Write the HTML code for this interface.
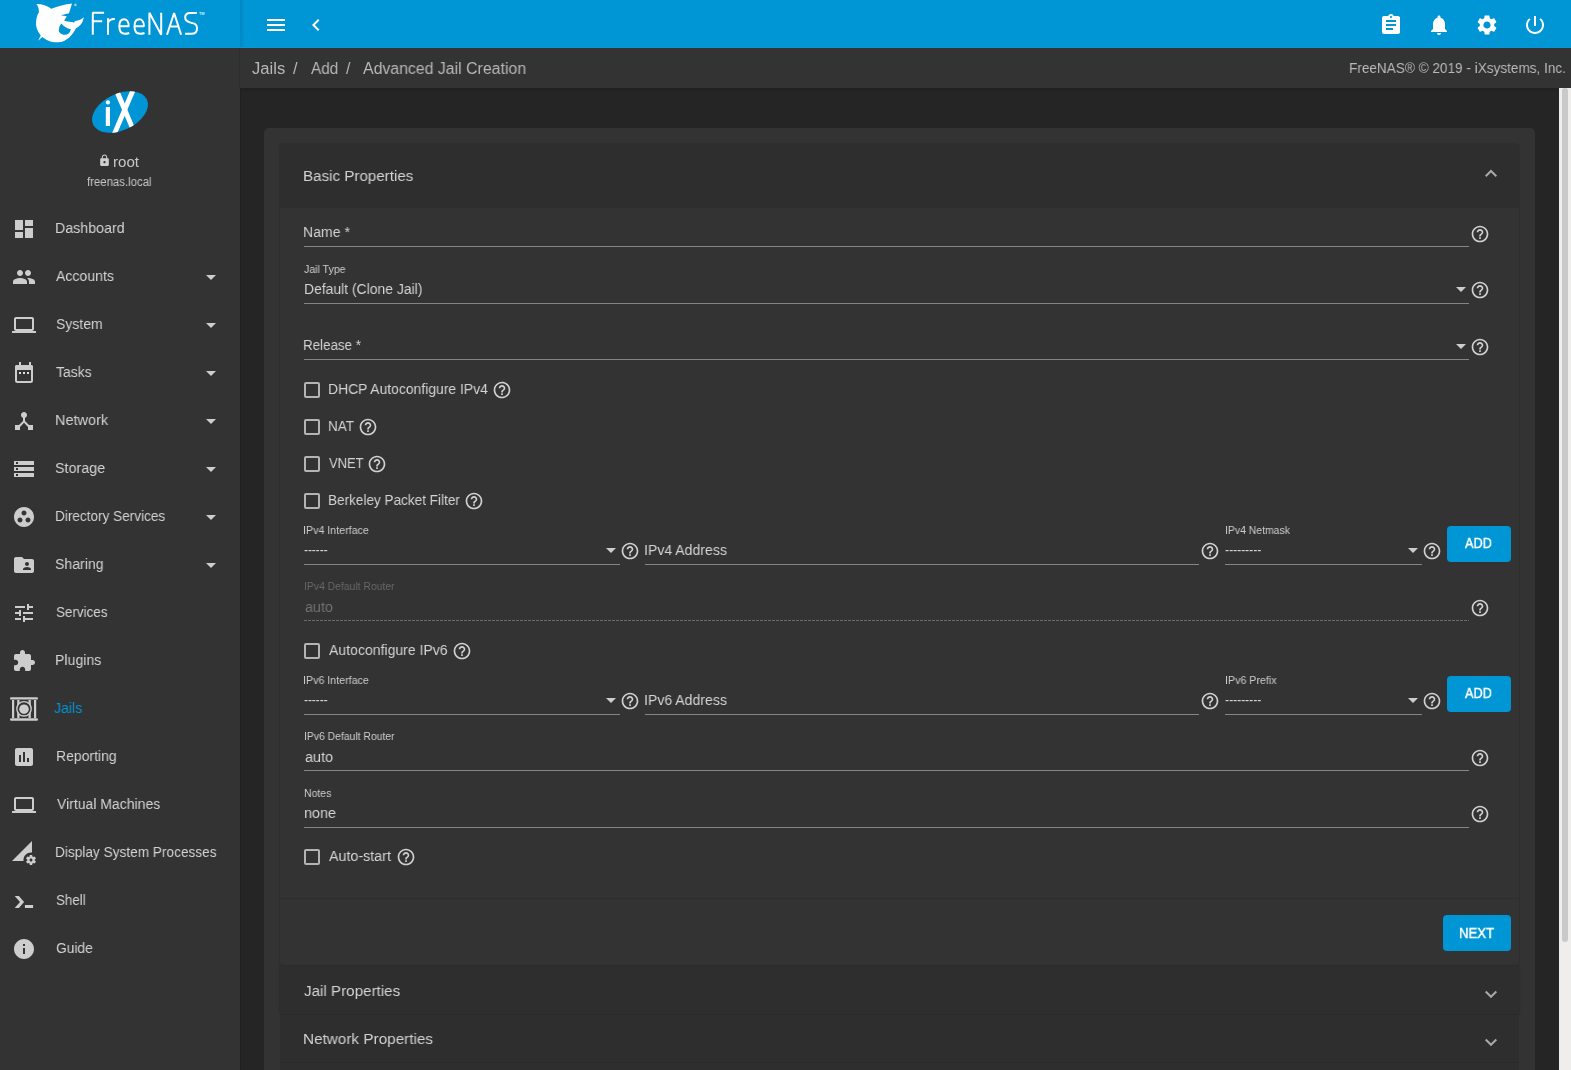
<!DOCTYPE html>
<html><head><meta charset="utf-8">
<style>
*{box-sizing:border-box;margin:0;padding:0}
html,body{width:1571px;height:1070px;overflow:hidden;background:#252525;font-family:"Liberation Sans",sans-serif;color:#ccc}
.a{position:absolute}
.t{position:absolute;white-space:nowrap;line-height:1;will-change:transform}
svg{position:absolute;overflow:visible}
.ul{position:absolute;height:1px;background:#8f8f8f}
.cb{position:absolute;width:16px;height:16px;border:2px solid #b4b4b4;border-radius:2px;left:304px}
.btn{position:absolute;background:#0095d5;border-radius:4px}
</style></head><body>
<div class="a" style="left:0px;top:0px;width:1571px;height:48px;background:#0095d5;"></div>
<div class="a" style="left:240px;top:0px;width:4px;height:48px;background:linear-gradient(to right,rgba(0,0,0,0.10),rgba(0,0,0,0));"></div>
<svg style="left:0;top:0" width="240" height="48" viewBox="0 0 240 48">
<path fill="#fff" fill-rule="evenodd" d="M36.3,4.1 C42,4 47,6 51.3,8.8 C58,6 65,4 72,3.4 L69,13.3 L60.8,15.3 L66.8,16.3 L64.2,20.6 C67,22 71,22 73.3,21.9 L73.6,23.2 L75,21 C79,20.5 82,19 83.6,17.2 C83.5,22 80,26.5 75.8,28.4 C73,34 67,42 57.8,42.3 C51,42.5 46,40 42.3,37 L38,40.8 L40.8,35.5 C37,31 35.5,26 36.1,21.5 C36.5,17 37.5,14.5 38.9,12.5 C39,8 38,6 36.3,4.1 Z M61.4,23.6 C64,27 67,28.5 70.9,29.2 C70,33 67.5,35 64.7,34.8 C61,34.6 58.3,32 58.9,29.7 C59.2,27 60,25 61.4,23.6 Z"/>
<circle cx="75.4" cy="4.9" r="1.3" fill="#8fd0ee"/>
<g fill="none" stroke="#fff" stroke-width="2" stroke-linejoin="bevel">
<path d="M92.8,34.8 V12.8 H104.1 M92.8,21.2 H102.2"/>
<path d="M108,34.8 V18.3 M108,22.5 C109.5,19.6 112,18.8 114.8,19"/>
<path d="M119.3,26.3 H128.7 C128.8,21.6 126.7,19.2 124,19.2 C121,19.2 119.3,22 119.3,26.6 C119.3,31.6 121.6,33.8 125,33.8 C126.6,33.8 128,33.5 129.3,33"/>
<path d="M134.5,26.3 H143.9 C144,21.6 141.9,19.2 139.2,19.2 C136.2,19.2 134.5,22 134.5,26.6 C134.5,31.6 136.8,33.8 140.2,33.8 C141.8,33.8 143.2,33.5 144.5,33"/>
<path d="M149.4,34.8 V12.8 L161.2,34.8 V12.8"/>
<path d="M167,34.8 L174.1,13 L181.1,34.8 M170.3,26.6 H177.9"/>
<path d="M196.8,13.1 H190 C186.6,13.1 185.2,15.2 185.2,17.6 C185.2,20.8 187.5,21.8 190.5,22.6 L193.5,23.4 C196.5,24.2 197,26 197,28.4 C197,31.8 195,33.8 191.4,33.8 H185.1"/>
</g>
<text x="198.9" y="14.9" font-size="3.9" fill="#d0ecf8" font-family="Liberation Sans" font-weight="bold">TM</text>
</svg>
<svg style="left:264px;top:13px" width="24" height="24" viewBox="0 0 24 24"><path fill="#fff" d="M3 18h18v-2H3v2zm0-5h18v-2H3v2zm0-7v2h18V6H3z" /></svg>
<svg style="left:304px;top:13px" width="24" height="24" viewBox="0 0 24 24"><path fill="#fff" d="M15.41 7.41L14 6l-6 6 6 6 1.41-1.41L10.83 12z" /></svg>
<svg style="left:1379px;top:13px" width="24" height="24" viewBox="0 0 24 24"><path fill="#fff" d="M19 3h-4.18C14.4 1.84 13.3 1 12 1c-1.3 0-2.4.84-2.82 2H5c-1.1 0-2 .9-2 2v14c0 1.1.9 2 2 2h14c1.1 0 2-.9 2-2V5c0-1.1-.9-2-2-2zm-7 0c.55 0 1 .45 1 1s-.45 1-1 1-1-.45-1-1 .45-1 1-1zm2 14H7v-2h7v2zm3-4H7v-2h10v2zm0-4H7V7h10v2z" /></svg>
<svg style="left:1427px;top:13px" width="24" height="24" viewBox="0 0 24 24"><path fill="#fff" d="M12 22c1.1 0 2-.9 2-2h-4c0 1.1.89 2 2 2zm6-6v-5c0-3.07-1.64-5.64-4.5-6.32V4c0-.83-.67-1.5-1.5-1.5s-1.5.67-1.5 1.5v.68C7.63 5.36 6 7.92 6 11v5l-2 2v1h16v-1l-2-2z" /></svg>
<svg style="left:1475px;top:13px" width="24" height="24" viewBox="0 0 24 24"><path fill="#fff" d="M19.14 12.94c.04-.3.06-.61.06-.94 0-.32-.02-.64-.07-.94l2.03-1.58c.18-.14.23-.41.12-.61l-1.92-3.32c-.12-.22-.37-.29-.59-.22l-2.39.96c-.5-.38-1.03-.7-1.62-.94l-.36-2.54c-.04-.24-.24-.41-.48-.41h-3.84c-.24 0-.43.17-.47.41l-.36 2.54c-.59.24-1.13.57-1.62.94l-2.39-.96c-.22-.08-.47 0-.59.22L2.74 8.87c-.12.21-.08.47.12.61l2.03 1.58c-.05.3-.09.63-.09.94s.02.64.07.94l-2.03 1.58c-.18.14-.23.41-.12.61l1.92 3.32c.12.22.37.29.59.22l2.39-.96c.5.38 1.03.7 1.62.94l.36 2.54c.05.24.24.41.48.41h3.84c.24 0 .44-.17.47-.41l.36-2.54c.59-.24 1.13-.56 1.62-.94l2.39.96c.22.08.47 0 .59-.22l1.92-3.32c.12-.22.07-.47-.12-.61l-2.01-1.58zM12 15.6c-1.98 0-3.6-1.62-3.6-3.6s1.62-3.6 3.6-3.6 3.6 1.62 3.6 3.6-1.62 3.6-3.6 3.6z" /></svg>
<svg style="left:1523px;top:13px" width="24" height="24" viewBox="0 0 24 24"><path fill="#fff" d="M13 3h-2v10h2V3zm4.83 2.17l-1.42 1.42C17.99 7.86 19 9.81 19 12c0 3.87-3.13 7-7 7s-7-3.13-7-7c0-2.19 1.01-4.14 2.58-5.42L6.17 5.17C4.23 6.82 3 9.26 3 12c0 4.97 4.03 9 9 9s9-4.03 9-9c0-2.74-1.23-5.18-3.17-6.83z" /></svg>
<div class="a" style="left:0px;top:48px;width:240px;height:1022px;background:#333;"></div>
<div class="a" style="left:240px;top:88px;width:1px;height:982px;background:#202020;"></div>
<div class="a" style="left:239px;top:48px;width:1px;height:40px;background:#2d2d2d;"></div>
<svg style="left:80px;top:80px" width="80" height="70" viewBox="80 80 80 70">
<defs><clipPath id="ixc"><ellipse cx="120" cy="112" rx="29.7" ry="18.3" transform="rotate(-25 120 112)"/></clipPath></defs>
<ellipse cx="120" cy="112" rx="29.7" ry="18.3" transform="rotate(-25 120 112)" fill="#0095d5"/>
<rect x="105.8" y="107" width="4.2" height="19" fill="#fff"/>
<circle cx="107.9" cy="102.4" r="2.1" fill="#fff"/>
<g clip-path="url(#ixc)" fill="#fff">
<path d="M113.4,89.9 L119.1,89.9 L135.0,127.9 L129.9,127.9 Z"/>
<path d="M131.2,88.2 L136.6,88.2 L116.4,135.2 L111.2,135.2 Z"/>
</g>
</svg>
<svg style="left:97.8px;top:153.5px" width="13" height="13" viewBox="0 0 24 24"><path fill="#cfcfcf" d="M18 8h-1V6c0-2.76-2.24-5-5-5S7 3.24 7 6v2H6c-1.1 0-2 .9-2 2v10c0 1.1.9 2 2 2h12c1.1 0 2-.9 2-2V10c0-1.1-.9-2-2-2zm-6 9c-1.1 0-2-.9-2-2s.9-2 2-2 2 .9 2 2-.9 2-2 2zm3.1-9H8.9V6c0-1.71 1.39-3.1 3.1-3.1 1.71 0 3.1 1.39 3.1 3.1v2z" /></svg>
<div class="t" style="left:113.12px;top:155.1px;font-size:14px;color:#c8c8c8;transform:scaleX(1.0783);transform-origin:0 0;">root</div>
<div class="t" style="left:87.30px;top:175.8px;font-size:12px;color:#c8c8c8;transform:scaleX(0.9485);transform-origin:0 0;">freenas.local</div>
<div class="t" style="left:55.48px;top:219.9px;font-size:15.5px;color:#d3d3d3;transform:scaleX(0.9176);transform-origin:0 0;">Dashboard</div>
<svg style="left:12px;top:217px" width="24" height="24" viewBox="0 0 24 24"><path fill="#cdcdcd" d="M3 13h8V3H3v10zm0 8h8v-6H3v6zm10 0h8V11h-8v10zm0-18v6h8V3h-8z" /></svg>
<div class="t" style="left:56.40px;top:267.9px;font-size:15.5px;color:#d3d3d3;transform:scaleX(0.9094);transform-origin:0 0;">Accounts</div>
<svg style="left:12px;top:265px" width="24" height="24" viewBox="0 0 24 24"><path fill="#cdcdcd" d="M16 11c1.66 0 2.99-1.34 2.99-3S17.66 5 16 5c-1.66 0-3 1.34-3 3s1.34 3 3 3zm-8 0c1.66 0 2.99-1.34 2.99-3S9.66 5 8 5C6.34 5 5 6.34 5 8s1.34 3 3 3zm0 2c-2.33 0-7 1.17-7 3.5V19h14v-2.5c0-2.33-4.67-3.5-7-3.5zm8 0c-.29 0-.62.02-.97.05 1.16.84 1.97 1.97 1.97 3.45V19h6v-2.5c0-2.33-4.67-3.5-7-3.5z" /></svg>
<svg style="left:199px;top:265px" width="24" height="24" viewBox="0 0 24 24"><path fill="#cdcdcd" d="M7 10l5 5 5-5z"/></svg>
<div class="t" style="left:55.50px;top:315.9px;font-size:15.5px;color:#d3d3d3;transform:scaleX(0.9040);transform-origin:0 0;">System</div>
<svg style="left:12px;top:313px" width="24" height="24" viewBox="0 0 24 24"><path fill="#cdcdcd" d="M20 18c1.1 0 1.99-.9 1.99-2L22 6c0-1.1-.9-2-2-2H4c-1.1 0-2 .9-2 2v10c0 1.1.9 2 2 2H0v2h24v-2h-4zM4 6h16v10H4V6z" /></svg>
<svg style="left:199px;top:313px" width="24" height="24" viewBox="0 0 24 24"><path fill="#cdcdcd" d="M7 10l5 5 5-5z"/></svg>
<div class="t" style="left:56.40px;top:363.9px;font-size:15.5px;color:#d3d3d3;transform:scaleX(0.9026);transform-origin:0 0;">Tasks</div>
<svg style="left:12px;top:361px" width="24" height="24" viewBox="0 0 24 24">
<rect x="4" y="5" width="16" height="16" rx="1.5" fill="none" stroke="#cdcdcd" stroke-width="2"/>
<rect x="3" y="4" width="18" height="5" rx="1.5" fill="#cdcdcd"/>
<rect x="7" y="1" width="2" height="4" fill="#cdcdcd"/><rect x="17" y="1" width="2" height="4" fill="#cdcdcd"/>
<rect x="7" y="11" width="2" height="2" fill="#e0e0e0"/><rect x="11" y="11" width="2" height="2" fill="#e0e0e0"/><rect x="15" y="11" width="2" height="2" fill="#e0e0e0"/>
</svg>
<svg style="left:199px;top:361px" width="24" height="24" viewBox="0 0 24 24"><path fill="#cdcdcd" d="M7 10l5 5 5-5z"/></svg>
<div class="t" style="left:55.46px;top:411.9px;font-size:15.5px;color:#d3d3d3;transform:scaleX(0.9357);transform-origin:0 0;">Network</div>
<svg style="left:12px;top:409px" width="24" height="24" viewBox="0 0 24 24"><path fill="#cdcdcd" d="M17 16l-4-4V8.82C14.16 8.4 15 7.3 15 6c0-1.66-1.34-3-3-3S9 4.34 9 6c0 1.3.84 2.4 2 2.82V12l-4 4H3v5h5v-3.05l4-4.2 4 4.2V21h5v-5h-4z" /></svg>
<svg style="left:199px;top:409px" width="24" height="24" viewBox="0 0 24 24"><path fill="#cdcdcd" d="M7 10l5 5 5-5z"/></svg>
<div class="t" style="left:55.48px;top:459.9px;font-size:15.5px;color:#d3d3d3;transform:scaleX(0.9226);transform-origin:0 0;">Storage</div>
<svg style="left:12px;top:457px" width="24" height="24" viewBox="0 0 24 24"><path fill="#cdcdcd" d="M2 20h20v-4H2v4zm2-3h2v2H4v-2zM2 4v4h20V4H2zm4 3H4V5h2v2zm-4 7h20v-4H2v4zm2-3h2v2H4v-2z" /></svg>
<svg style="left:199px;top:457px" width="24" height="24" viewBox="0 0 24 24"><path fill="#cdcdcd" d="M7 10l5 5 5-5z"/></svg>
<div class="t" style="left:55.12px;top:507.9px;font-size:15.5px;color:#d3d3d3;transform:scaleX(0.8760);transform-origin:0 0;">Directory Services</div>
<svg style="left:12px;top:505px" width="24" height="24" viewBox="0 0 24 24"><path fill="#cdcdcd" d="M12 2C6.48 2 2 6.48 2 12s4.48 10 10 10 10-4.48 10-10S17.52 2 12 2zM8 17.5c-1.38 0-2.5-1.12-2.5-2.5s1.12-2.5 2.5-2.5 2.5 1.12 2.5 2.5-1.12 2.5-2.5 2.5zM9.5 8c0-1.38 1.12-2.5 2.5-2.5s2.5 1.12 2.5 2.5-1.12 2.5-2.5 2.5S9.5 9.38 9.5 8zm6.5 9.5c-1.38 0-2.5-1.12-2.5-2.5s1.12-2.5 2.5-2.5 2.5 1.12 2.5 2.5-1.12 2.5-2.5 2.5z" /></svg>
<svg style="left:199px;top:505px" width="24" height="24" viewBox="0 0 24 24"><path fill="#cdcdcd" d="M7 10l5 5 5-5z"/></svg>
<div class="t" style="left:55.49px;top:555.9px;font-size:15.5px;color:#d3d3d3;transform:scaleX(0.9096);transform-origin:0 0;">Sharing</div>
<svg style="left:12px;top:553px" width="24" height="24" viewBox="0 0 24 24"><path fill="#cdcdcd" d="M20 6h-8l-2-2H4c-1.1 0-1.99.9-1.99 2L2 18c0 1.1.9 2 2 2h16c1.1 0 2-.9 2-2V8c0-1.1-.9-2-2-2zm-5 3c1.1 0 2 .9 2 2s-.9 2-2 2-2-.9-2-2 .9-2 2-2zm4 8h-8v-1c0-1.33 2.67-2 4-2s4 .67 4 2v1z" /></svg>
<svg style="left:199px;top:553px" width="24" height="24" viewBox="0 0 24 24"><path fill="#cdcdcd" d="M7 10l5 5 5-5z"/></svg>
<div class="t" style="left:55.53px;top:603.9px;font-size:15.5px;color:#d3d3d3;transform:scaleX(0.8672);transform-origin:0 0;">Services</div>
<svg style="left:12px;top:601px" width="24" height="24" viewBox="0 0 24 24"><path fill="#cdcdcd" d="M3 17v2h6v-2H3zM3 5v2h10V5H3zm10 16v-2h8v-2h-8v-2h-2v6h2zM7 9v2H3v2h4v2h2V9H7zm14 4v-2H11v2h10zm-6-4h2V7h4V5h-4V3h-2v6z" /></svg>
<div class="t" style="left:55.49px;top:651.9px;font-size:15.5px;color:#d3d3d3;transform:scaleX(0.9120);transform-origin:0 0;">Plugins</div>
<svg style="left:12px;top:649px" width="24" height="24" viewBox="0 0 24 24"><path fill="#cdcdcd" d="M20.5 11H19V7c0-1.1-.9-2-2-2h-4V3.5C13 2.12 11.88 1 10.5 1S8 2.12 8 3.5V5H4c-1.1 0-1.99.9-1.99 2v3.8H3.5c1.49 0 2.7 1.21 2.7 2.7s-1.21 2.7-2.7 2.7H2V20c0 1.1.9 2 2 2h3.8v-1.5c0-1.490 1.21-2.7 2.7-2.7 1.49 0 2.7 1.21 2.7 2.7V22H17c1.1 0 2-.9 2-2v-4h1.5c1.38 0 2.5-1.12 2.5-2.5S21.88 11 20.5 11z" /></svg>
<div class="t" style="left:54.40px;top:699.9px;font-size:15.5px;color:#0095d5;transform:scaleX(0.9097);transform-origin:0 0;">Jails</div>
<svg style="left:10px;top:696px" width="28" height="24" viewBox="0 0 28 24">
<rect x="0" y="1.2" width="28" height="2.4" rx="1.2" fill="#cdcdcd"/>
<rect x="0" y="22.3" width="28" height="2.4" rx="1.2" fill="#cdcdcd"/>
<rect x="2" y="4" width="2.2" height="18" fill="#cdcdcd"/>
<rect x="7.2" y="4" width="2.3" height="18" fill="#cdcdcd"/>
<rect x="18.5" y="4" width="2.3" height="18" fill="#cdcdcd"/>
<rect x="24" y="4" width="2.2" height="18" fill="#cdcdcd"/>
<circle cx="14" cy="12.8" r="7.2" fill="#333" stroke="#cdcdcd" stroke-width="1.4"/>
<circle cx="14" cy="13.2" r="4.8" fill="#cdcdcd"/>
</svg>
<div class="t" style="left:55.70px;top:747.9px;font-size:15.5px;color:#d3d3d3;transform:scaleX(0.9030);transform-origin:0 0;">Reporting</div>
<svg style="left:12px;top:745px" width="24" height="24" viewBox="0 0 24 24"><path fill="#cdcdcd" d="M19 3H5c-1.1 0-2 .9-2 2v14c0 1.1.9 2 2 2h14c1.1 0 2-.9 2-2V5c0-1.1-.9-2-2-2zM9 17H7v-7h2v7zm4 0h-2V7h2v10zm4 0h-2v-4h2v4z" /></svg>
<div class="t" style="left:56.60px;top:795.9px;font-size:15.5px;color:#d3d3d3;transform:scaleX(0.9035);transform-origin:0 0;">Virtual Machines</div>
<svg style="left:12px;top:793px" width="24" height="24" viewBox="0 0 24 24"><path fill="#cdcdcd" d="M20 18c1.1 0 1.99-.9 1.99-2L22 6c0-1.1-.9-2-2-2H4c-1.1 0-2 .9-2 2v10c0 1.1.9 2 2 2H0v2h24v-2h-4zM4 6h16v10H4V6z" /></svg>
<div class="t" style="left:55.42px;top:843.9px;font-size:15.5px;color:#d3d3d3;transform:scaleX(0.8808);transform-origin:0 0;">Display System Processes</div>
<svg style="left:12px;top:841px" width="24" height="24" viewBox="0 0 24 24"><path fill="#cdcdcd" d="M18.99 11.5c.34 0 .67.03 1 .07L20 0 0 20h11.56c-.04-.33-.07-.66-.07-1 0-4.14 3.36-7.5 7.5-7.5zm3.71 7.99c.02-.16.04-.32.04-.49 0-.17-.01-.33-.04-.49l1.06-.83c.09-.08.12-.21.06-.32l-1-1.73c-.06-.11-.19-.15-.31-.11l-1.24.5c-.26-.2-.54-.37-.85-.49l-.19-1.32c-.01-.12-.12-.21-.24-.21h-2c-.12 0-.23.09-.25.21l-.19 1.32c-.3.13-.59.29-.85.49l-1.240-.5c-.11-.04-.24 0-.31.11l-1 1.73c-.06.11-.04.24.06.32l1.06.83c-.02.16-.03.32-.03.49 0 .17.01.33.03.49l-1.06.83c-.09.08-.12.21-.06.32l1 1.73c.06.11.19.15.31.11l1.24-.5c.26.2.54.37.85.49l.19 1.32c.02.12.12.21.25.21h2c.12 0 .23-.09.25-.21l.19-1.32c.3-.13.59-.29.84-.49l1.25.5c.11.04.24 0 .31-.11l1-1.73c.06-.11.03-.24-.06-.32l-1.07-.83zm-3.71 1.01c-.83 0-1.5-.67-1.5-1.5s.67-1.5 1.5-1.5 1.5.67 1.5 1.5-.67 1.5-1.5 1.5z" /></svg>
<div class="t" style="left:55.74px;top:891.9px;font-size:15.5px;color:#d3d3d3;transform:scaleX(0.8606);transform-origin:0 0;">Shell</div>
<svg style="left:12px;top:889px" width="24" height="24" viewBox="0 0 24 24"><path fill="#cdcdcd" d="M2.7,7 L6.9,7 L12.1,13 L6.9,18.9 L2.7,18.9 L8,13 Z M12.9,16 H21.1 V19 H12.9 Z" /></svg>
<div class="t" style="left:55.71px;top:939.9px;font-size:15.5px;color:#d3d3d3;transform:scaleX(0.8900);transform-origin:0 0;">Guide</div>
<svg style="left:12px;top:937px" width="24" height="24" viewBox="0 0 24 24"><path fill="#cdcdcd" d="M12 2C6.48 2 2 6.48 2 12s4.48 10 10 10 10-4.48 10-10S17.52 2 12 2zm1 15h-2v-6h2v6zm0-8h-2V7h2v2z" /></svg>
<div class="a" style="left:240px;top:48px;width:1331px;height:40px;background:#333;"></div>
<div class="t" style="left:251.50px;top:60.9px;font-size:16px;color:#b8b8b8;transform:scaleX(1.0375);transform-origin:0 0;">Jails</div>
<div class="t" style="left:293.40px;top:60.9px;font-size:16px;color:#b8b8b8;transform:scaleX(1.0200);transform-origin:0 0;">/</div>
<div class="t" style="left:310.50px;top:60.9px;font-size:16px;color:#b8b8b8;transform:scaleX(0.9571);transform-origin:0 0;">Add</div>
<div class="t" style="left:346.20px;top:60.9px;font-size:16px;color:#b8b8b8;transform:scaleX(0.9600);transform-origin:0 0;">/</div>
<div class="t" style="left:363.10px;top:60.9px;font-size:16px;color:#b8b8b8;transform:scaleX(0.9909);transform-origin:0 0;">Advanced Jail Creation</div>
<div class="t" style="left:1349.12px;top:60.1px;font-size:15.5px;color:#b8b8b8;transform:scaleX(0.8760);transform-origin:0 0;">FreeNAS&reg; &copy; 2019 - iXsystems, Inc.</div>
<div class="a" style="left:241px;top:88px;width:1318px;height:1px;background:#202020;"></div>
<div class="a" style="left:241px;top:89px;width:1318px;height:4px;background:linear-gradient(rgba(0,0,0,0.10),rgba(0,0,0,0));"></div>
<div class="a" style="left:0px;top:48px;width:1571px;height:1px;background:#3a302c;"></div>
<div class="a" style="left:0px;top:47px;width:1571px;height:1px;background:#009ade;"></div>
<div class="a" style="left:1559px;top:88px;width:12px;height:982px;background:#efeeec;"></div>
<div class="a" style="left:1562px;top:88px;width:6px;height:854px;background:#c9c9c9;border-radius:3px;"></div>
<div class="a" style="left:264px;top:128px;width:1271px;height:942px;background:#333;border-radius:5px 5px 0 0;"></div>
<div class="a" style="left:280px;top:144px;width:1239px;height:822px;background:#333;border-radius:4px;box-shadow:0 0 2px rgba(0,0,0,0.35);"></div>
<div class="a" style="left:280px;top:144px;width:1239px;height:64px;background:#2e2e2e;border-radius:4px 4px 0 0;"></div>
<div class="t" style="left:302.92px;top:168.1px;font-size:15.5px;color:#d3d3d3;transform:scaleX(0.9777);transform-origin:0 0;">Basic Properties</div>
<svg style="left:1479px;top:161px" width="24" height="24" viewBox="0 0 24 24"><path fill="none" stroke="#a8a8a8" stroke-width="2" d="M6.7,15.3 L12,10 L17.3,15.3"/></svg>
<div class="t" style="left:303.49px;top:223.7px;font-size:15.5px;color:#d3d3d3;transform:scaleX(0.9080);transform-origin:0 0;">Name *</div>
<div class="ul" style="left:304px;top:246px;width:1165px;background:#858585"></div>
<svg style="left:1470.0px;top:223.5px" width="20" height="20" viewBox="0 0 24 24"><path fill="#d0d0d0" d="M11 18h2v-2h-2v2zm1-16C6.48 2 2 6.48 2 12s4.48 10 10 10 10-4.48 10-10S17.52 2 12 2zm0 18c-4.41 0-8-3.59-8-8s3.59-8 8-8 8 3.59 8 8-3.59 8-8 8zm0-14c-2.21 0-4 1.79-4 4h2c0-1.1.9-2 2-2s2 .9 2 2c0 2-3 1.750-3 5h2c0-2.25 3-2.5 3-5 0-2.210-1.79-4-4-4z" /></svg>
<div class="t" style="left:304.00px;top:263.7px;font-size:11px;color:#cdcdcd;transform:scaleX(0.9628);transform-origin:0 0;">Jail Type</div>
<div class="t" style="left:303.50px;top:280.8px;font-size:15.5px;color:#d3d3d3;transform:scaleX(0.8977);transform-origin:0 0;">Default (Clone Jail)</div>
<div class="ul" style="left:304px;top:303px;width:1165px;background:#858585"></div>
<svg style="left:1449px;top:277.0px" width="24" height="24" viewBox="0 0 24 24"><path fill="#cdcdcd" d="M7 10l5 5 5-5z"/></svg>
<svg style="left:1470.0px;top:279.6px" width="20" height="20" viewBox="0 0 24 24"><path fill="#d0d0d0" d="M11 18h2v-2h-2v2zm1-16C6.48 2 2 6.48 2 12s4.48 10 10 10 10-4.48 10-10S17.52 2 12 2zm0 18c-4.41 0-8-3.59-8-8s3.59-8 8-8 8 3.59 8 8-3.59 8-8 8zm0-14c-2.21 0-4 1.79-4 4h2c0-1.1.9-2 2-2s2 .9 2 2c0 2-3 1.750-3 5h2c0-2.25 3-2.5 3-5 0-2.210-1.79-4-4-4z" /></svg>
<div class="t" style="left:303.24px;top:336.9px;font-size:15.5px;color:#d3d3d3;transform:scaleX(0.8621);transform-origin:0 0;">Release *</div>
<div class="ul" style="left:304px;top:359px;width:1165px;background:#858585"></div>
<svg style="left:1449px;top:333.9px" width="24" height="24" viewBox="0 0 24 24"><path fill="#cdcdcd" d="M7 10l5 5 5-5z"/></svg>
<svg style="left:1470.0px;top:336.6px" width="20" height="20" viewBox="0 0 24 24"><path fill="#d0d0d0" d="M11 18h2v-2h-2v2zm1-16C6.48 2 2 6.48 2 12s4.48 10 10 10 10-4.48 10-10S17.52 2 12 2zm0 18c-4.41 0-8-3.59-8-8s3.59-8 8-8 8 3.59 8 8-3.59 8-8 8zm0-14c-2.21 0-4 1.79-4 4h2c0-1.1.9-2 2-2s2 .9 2 2c0 2-3 1.750-3 5h2c0-2.25 3-2.5 3-5 0-2.210-1.79-4-4-4z" /></svg>
<div class="cb" style="top:382px"></div>
<div class="t" style="left:327.60px;top:380.9px;font-size:15.5px;color:#d3d3d3;transform:scaleX(0.8977);transform-origin:0 0;">DHCP Autoconfigure IPv4</div>
<svg style="left:492.0px;top:380.0px" width="20" height="20" viewBox="0 0 24 24"><path fill="#d0d0d0" d="M11 18h2v-2h-2v2zm1-16C6.48 2 2 6.48 2 12s4.48 10 10 10 10-4.48 10-10S17.52 2 12 2zm0 18c-4.41 0-8-3.59-8-8s3.59-8 8-8 8 3.59 8 8-3.59 8-8 8zm0-14c-2.21 0-4 1.79-4 4h2c0-1.1.9-2 2-2s2 .9 2 2c0 2-3 1.750-3 5h2c0-2.25 3-2.5 3-5 0-2.210-1.79-4-4-4z" /></svg>
<div class="cb" style="top:419px"></div>
<div class="t" style="left:327.63px;top:417.9px;font-size:15.5px;color:#d3d3d3;transform:scaleX(0.8690);transform-origin:0 0;">NAT</div>
<svg style="left:358.0px;top:417.0px" width="20" height="20" viewBox="0 0 24 24"><path fill="#d0d0d0" d="M11 18h2v-2h-2v2zm1-16C6.48 2 2 6.48 2 12s4.48 10 10 10 10-4.48 10-10S17.52 2 12 2zm0 18c-4.41 0-8-3.59-8-8s3.59-8 8-8 8 3.59 8 8-3.59 8-8 8zm0-14c-2.21 0-4 1.79-4 4h2c0-1.1.9-2 2-2s2 .9 2 2c0 2-3 1.750-3 5h2c0-2.25 3-2.5 3-5 0-2.210-1.79-4-4-4z" /></svg>
<div class="cb" style="top:456px"></div>
<div class="t" style="left:328.50px;top:454.9px;font-size:15.5px;color:#d3d3d3;transform:scaleX(0.8390);transform-origin:0 0;">VNET</div>
<svg style="left:367.0px;top:454.0px" width="20" height="20" viewBox="0 0 24 24"><path fill="#d0d0d0" d="M11 18h2v-2h-2v2zm1-16C6.48 2 2 6.48 2 12s4.48 10 10 10 10-4.48 10-10S17.52 2 12 2zm0 18c-4.41 0-8-3.59-8-8s3.59-8 8-8 8 3.59 8 8-3.59 8-8 8zm0-14c-2.21 0-4 1.79-4 4h2c0-1.1.9-2 2-2s2 .9 2 2c0 2-3 1.750-3 5h2c0-2.25 3-2.5 3-5 0-2.210-1.79-4-4-4z" /></svg>
<div class="cb" style="top:493px"></div>
<div class="t" style="left:327.63px;top:491.9px;font-size:15.5px;color:#d3d3d3;transform:scaleX(0.8747);transform-origin:0 0;">Berkeley Packet Filter</div>
<svg style="left:464.0px;top:491.0px" width="20" height="20" viewBox="0 0 24 24"><path fill="#d0d0d0" d="M11 18h2v-2h-2v2zm1-16C6.48 2 2 6.48 2 12s4.48 10 10 10 10-4.48 10-10S17.52 2 12 2zm0 18c-4.41 0-8-3.59-8-8s3.59-8 8-8 8 3.59 8 8-3.59 8-8 8zm0-14c-2.21 0-4 1.79-4 4h2c0-1.1.9-2 2-2s2 .9 2 2c0 2-3 1.750-3 5h2c0-2.25 3-2.5 3-5 0-2.210-1.79-4-4-4z" /></svg>
<div class="t" style="left:303.13px;top:525.0px;font-size:11px;color:#cdcdcd;transform:scaleX(0.9701);transform-origin:0 0;">IPv4 Interface</div>
<div class="t" style="left:304.20px;top:541.9px;font-size:15.5px;color:#d3d3d3;transform:scaleX(0.7581);transform-origin:0 0;">------</div>
<div class="ul" style="left:304px;top:564px;width:316px;background:#858585"></div>
<svg style="left:599px;top:538.0px" width="24" height="24" viewBox="0 0 24 24"><path fill="#cdcdcd" d="M7 10l5 5 5-5z"/></svg>
<svg style="left:620.0px;top:540.7px" width="20" height="20" viewBox="0 0 24 24"><path fill="#d0d0d0" d="M11 18h2v-2h-2v2zm1-16C6.48 2 2 6.48 2 12s4.48 10 10 10 10-4.48 10-10S17.52 2 12 2zm0 18c-4.41 0-8-3.59-8-8s3.59-8 8-8 8 3.59 8 8-3.59 8-8 8zm0-14c-2.21 0-4 1.79-4 4h2c0-1.1.9-2 2-2s2 .9 2 2c0 2-3 1.750-3 5h2c0-2.25 3-2.5 3-5 0-2.210-1.79-4-4-4z" /></svg>
<div class="t" style="left:644.46px;top:542.4px;font-size:15px;color:#d3d3d3;transform:scaleX(0.9379);transform-origin:0 0;">IPv4 Address</div>
<div class="ul" style="left:645px;top:564px;width:554px;background:#858585"></div>
<svg style="left:1200.0px;top:540.7px" width="20" height="20" viewBox="0 0 24 24"><path fill="#d0d0d0" d="M11 18h2v-2h-2v2zm1-16C6.48 2 2 6.48 2 12s4.48 10 10 10 10-4.48 10-10S17.52 2 12 2zm0 18c-4.41 0-8-3.59-8-8s3.59-8 8-8 8 3.59 8 8-3.59 8-8 8zm0-14c-2.21 0-4 1.79-4 4h2c0-1.1.9-2 2-2s2 .9 2 2c0 2-3 1.750-3 5h2c0-2.25 3-2.5 3-5 0-2.210-1.79-4-4-4z" /></svg>
<div class="t" style="left:1224.55px;top:525.0px;font-size:11px;color:#cdcdcd;transform:scaleX(0.9485);transform-origin:0 0;">IPv4 Netmask</div>
<div class="t" style="left:1225.00px;top:541.9px;font-size:15.5px;color:#d3d3d3;transform:scaleX(0.7804);transform-origin:0 0;">---------</div>
<div class="ul" style="left:1225px;top:564px;width:197px;background:#858585"></div>
<svg style="left:1401px;top:538.0px" width="24" height="24" viewBox="0 0 24 24"><path fill="#cdcdcd" d="M7 10l5 5 5-5z"/></svg>
<svg style="left:1422.0px;top:540.7px" width="20" height="20" viewBox="0 0 24 24"><path fill="#d0d0d0" d="M11 18h2v-2h-2v2zm1-16C6.48 2 2 6.48 2 12s4.48 10 10 10 10-4.48 10-10S17.52 2 12 2zm0 18c-4.41 0-8-3.59-8-8s3.59-8 8-8 8 3.59 8 8-3.59 8-8 8zm0-14c-2.21 0-4 1.79-4 4h2c0-1.1.9-2 2-2s2 .9 2 2c0 2-3 1.750-3 5h2c0-2.25 3-2.5 3-5 0-2.210-1.79-4-4-4z" /></svg>
<div class="btn" style="left:1447px;top:526px;width:64px;height:36px"></div>
<div class="t" style="left:1465.30px;top:535.3px;font-size:15px;color:#ffffff;transform:scaleX(0.8484);transform-origin:0 0;-webkit-text-stroke:0.45px #fff;">ADD</div>
<div class="t" style="left:303.66px;top:580.6px;font-size:11px;color:#686868;transform:scaleX(0.9432);transform-origin:0 0;">IPv4 Default Router</div>
<div class="t" style="left:304.50px;top:598.6px;font-size:15.5px;color:#727272;transform:scaleX(0.9267);transform-origin:0 0;">auto</div>
<div class="a" style="left:304px;top:620px;width:1165px;height:1px;background-image:linear-gradient(to right,#6a6a6a 0,#6a6a6a 3px,transparent 3px);background-size:4px 1px"></div>
<svg style="left:1470.0px;top:597.5px" width="20" height="20" viewBox="0 0 24 24"><path fill="#d0d0d0" d="M11 18h2v-2h-2v2zm1-16C6.48 2 2 6.48 2 12s4.48 10 10 10 10-4.48 10-10S17.52 2 12 2zm0 18c-4.41 0-8-3.59-8-8s3.59-8 8-8 8 3.59 8 8-3.59 8-8 8zm0-14c-2.21 0-4 1.79-4 4h2c0-1.1.9-2 2-2s2 .9 2 2c0 2-3 1.750-3 5h2c0-2.25 3-2.5 3-5 0-2.210-1.79-4-4-4z" /></svg>
<div class="cb" style="top:643px"></div>
<div class="t" style="left:328.50px;top:641.9px;font-size:15.5px;color:#d3d3d3;transform:scaleX(0.9061);transform-origin:0 0;">Autoconfigure IPv6</div>
<svg style="left:452.0px;top:641.0px" width="20" height="20" viewBox="0 0 24 24"><path fill="#d0d0d0" d="M11 18h2v-2h-2v2zm1-16C6.48 2 2 6.48 2 12s4.48 10 10 10 10-4.48 10-10S17.52 2 12 2zm0 18c-4.41 0-8-3.59-8-8s3.59-8 8-8 8 3.59 8 8-3.59 8-8 8zm0-14c-2.21 0-4 1.79-4 4h2c0-1.1.9-2 2-2s2 .9 2 2c0 2-3 1.750-3 5h2c0-2.25 3-2.5 3-5 0-2.210-1.79-4-4-4z" /></svg>
<div class="t" style="left:303.13px;top:675.0px;font-size:11px;color:#cdcdcd;transform:scaleX(0.9701);transform-origin:0 0;">IPv6 Interface</div>
<div class="t" style="left:304.20px;top:691.9px;font-size:15.5px;color:#d3d3d3;transform:scaleX(0.7581);transform-origin:0 0;">------</div>
<div class="ul" style="left:304px;top:714px;width:316px;background:#858585"></div>
<svg style="left:599px;top:688.0px" width="24" height="24" viewBox="0 0 24 24"><path fill="#cdcdcd" d="M7 10l5 5 5-5z"/></svg>
<svg style="left:620.0px;top:690.7px" width="20" height="20" viewBox="0 0 24 24"><path fill="#d0d0d0" d="M11 18h2v-2h-2v2zm1-16C6.48 2 2 6.48 2 12s4.48 10 10 10 10-4.48 10-10S17.52 2 12 2zm0 18c-4.41 0-8-3.59-8-8s3.59-8 8-8 8 3.59 8 8-3.59 8-8 8zm0-14c-2.21 0-4 1.79-4 4h2c0-1.1.9-2 2-2s2 .9 2 2c0 2-3 1.750-3 5h2c0-2.25 3-2.5 3-5 0-2.210-1.79-4-4-4z" /></svg>
<div class="t" style="left:644.46px;top:692.4px;font-size:15px;color:#d3d3d3;transform:scaleX(0.9379);transform-origin:0 0;">IPv6 Address</div>
<div class="ul" style="left:645px;top:714px;width:554px;background:#858585"></div>
<svg style="left:1200.0px;top:690.7px" width="20" height="20" viewBox="0 0 24 24"><path fill="#d0d0d0" d="M11 18h2v-2h-2v2zm1-16C6.48 2 2 6.48 2 12s4.48 10 10 10 10-4.48 10-10S17.52 2 12 2zm0 18c-4.41 0-8-3.59-8-8s3.59-8 8-8 8 3.59 8 8-3.59 8-8 8zm0-14c-2.21 0-4 1.79-4 4h2c0-1.1.9-2 2-2s2 .9 2 2c0 2-3 1.750-3 5h2c0-2.25 3-2.5 3-5 0-2.210-1.79-4-4-4z" /></svg>
<div class="t" style="left:1224.53px;top:675.0px;font-size:11px;color:#cdcdcd;transform:scaleX(0.9692);transform-origin:0 0;">IPv6 Prefix</div>
<div class="t" style="left:1225.00px;top:691.9px;font-size:15.5px;color:#d3d3d3;transform:scaleX(0.7804);transform-origin:0 0;">---------</div>
<div class="ul" style="left:1225px;top:714px;width:197px;background:#858585"></div>
<svg style="left:1401px;top:688.0px" width="24" height="24" viewBox="0 0 24 24"><path fill="#cdcdcd" d="M7 10l5 5 5-5z"/></svg>
<svg style="left:1422.0px;top:690.7px" width="20" height="20" viewBox="0 0 24 24"><path fill="#d0d0d0" d="M11 18h2v-2h-2v2zm1-16C6.48 2 2 6.48 2 12s4.48 10 10 10 10-4.48 10-10S17.52 2 12 2zm0 18c-4.41 0-8-3.59-8-8s3.59-8 8-8 8 3.59 8 8-3.59 8-8 8zm0-14c-2.21 0-4 1.79-4 4h2c0-1.1.9-2 2-2s2 .9 2 2c0 2-3 1.750-3 5h2c0-2.25 3-2.5 3-5 0-2.210-1.79-4-4-4z" /></svg>
<div class="btn" style="left:1447px;top:676px;width:64px;height:36px"></div>
<div class="t" style="left:1465.30px;top:685.3px;font-size:15px;color:#ffffff;transform:scaleX(0.8484);transform-origin:0 0;-webkit-text-stroke:0.45px #fff;">ADD</div>
<div class="t" style="left:303.56px;top:730.6px;font-size:11px;color:#cdcdcd;transform:scaleX(0.9432);transform-origin:0 0;">IPv6 Default Router</div>
<div class="t" style="left:304.50px;top:748.7px;font-size:15.5px;color:#d3d3d3;transform:scaleX(0.9333);transform-origin:0 0;">auto</div>
<div class="ul" style="left:304px;top:770px;width:1165px;background:#858585"></div>
<svg style="left:1470.0px;top:747.5px" width="20" height="20" viewBox="0 0 24 24"><path fill="#d0d0d0" d="M11 18h2v-2h-2v2zm1-16C6.48 2 2 6.48 2 12s4.48 10 10 10 10-4.48 10-10S17.52 2 12 2zm0 18c-4.41 0-8-3.59-8-8s3.59-8 8-8 8 3.59 8 8-3.59 8-8 8zm0-14c-2.21 0-4 1.79-4 4h2c0-1.1.9-2 2-2s2 .9 2 2c0 2-3 1.750-3 5h2c0-2.25 3-2.5 3-5 0-2.210-1.79-4-4-4z" /></svg>
<div class="t" style="left:303.55px;top:788.0px;font-size:11px;color:#cdcdcd;transform:scaleX(0.9536);transform-origin:0 0;">Notes</div>
<div class="t" style="left:303.57px;top:804.9px;font-size:15.5px;color:#d3d3d3;transform:scaleX(0.9303);transform-origin:0 0;">none</div>
<div class="ul" style="left:304px;top:827px;width:1165px;background:#858585"></div>
<svg style="left:1470.0px;top:803.5px" width="20" height="20" viewBox="0 0 24 24"><path fill="#d0d0d0" d="M11 18h2v-2h-2v2zm1-16C6.48 2 2 6.48 2 12s4.48 10 10 10 10-4.48 10-10S17.52 2 12 2zm0 18c-4.41 0-8-3.59-8-8s3.59-8 8-8 8 3.59 8 8-3.59 8-8 8zm0-14c-2.21 0-4 1.79-4 4h2c0-1.1.9-2 2-2s2 .9 2 2c0 2-3 1.750-3 5h2c0-2.25 3-2.5 3-5 0-2.210-1.79-4-4-4z" /></svg>
<div class="cb" style="top:849px"></div>
<div class="t" style="left:328.50px;top:847.9px;font-size:15.5px;color:#d3d3d3;transform:scaleX(0.9206);transform-origin:0 0;">Auto-start</div>
<svg style="left:396.0px;top:847.0px" width="20" height="20" viewBox="0 0 24 24"><path fill="#d0d0d0" d="M11 18h2v-2h-2v2zm1-16C6.48 2 2 6.48 2 12s4.48 10 10 10 10-4.48 10-10S17.52 2 12 2zm0 18c-4.41 0-8-3.59-8-8s3.59-8 8-8 8 3.59 8 8-3.59 8-8 8zm0-14c-2.21 0-4 1.79-4 4h2c0-1.1.9-2 2-2s2 .9 2 2c0 2-3 1.750-3 5h2c0-2.25 3-2.5 3-5 0-2.210-1.79-4-4-4z" /></svg>
<div class="a" style="left:280px;top:898px;width:1239px;height:1px;background:#2d2d2d;"></div>
<div class="btn" style="left:1443px;top:915px;width:68px;height:36px"></div>
<div class="t" style="left:1458.62px;top:925.3px;font-size:15px;color:#ffffff;transform:scaleX(0.8795);transform-origin:0 0;-webkit-text-stroke:0.45px #fff;">NEXT</div>
<div class="a" style="left:280px;top:966px;width:1239px;height:48px;background:#2e2e2e;box-shadow:0 0 2px rgba(0,0,0,0.35);"></div>
<div class="t" style="left:304.10px;top:983.2px;font-size:15.5px;color:#d3d3d3;transform:scaleX(0.9796);transform-origin:0 0;">Jail Properties</div>
<svg style="left:1479px;top:982px" width="24" height="24" viewBox="0 0 24 24"><path fill="none" stroke="#a8a8a8" stroke-width="2" d="M6.7,9.5 L12,14.8 L17.3,9.5"/></svg>
<div class="a" style="left:280px;top:1014px;width:1239px;height:1px;background:#2a2a2a;"></div>
<div class="a" style="left:280px;top:1015px;width:1239px;height:48px;background:#2e2e2e;"></div>
<div class="t" style="left:303.11px;top:1030.7px;font-size:15.5px;color:#d3d3d3;transform:scaleX(0.9863);transform-origin:0 0;">Network Properties</div>
<svg style="left:1479px;top:1030px" width="24" height="24" viewBox="0 0 24 24"><path fill="none" stroke="#a8a8a8" stroke-width="2" d="M6.7,9.5 L12,14.8 L17.3,9.5"/></svg>
<div class="a" style="left:280px;top:1062px;width:1239px;height:1px;background:#2a2a2a;"></div>
<div class="a" style="left:280px;top:1063px;width:1239px;height:10px;background:#2e2e2e;"></div>
</body></html>
